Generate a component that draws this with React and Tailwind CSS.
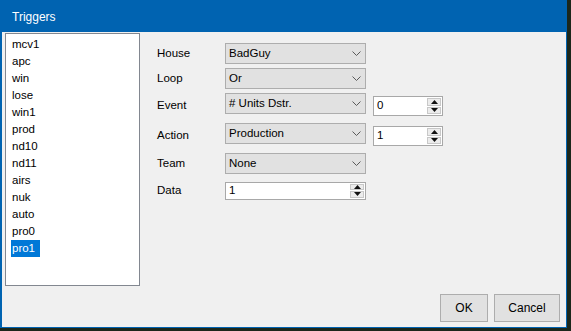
import { useState } from "react";

const TRIGGERS = ["mcv1", "apc", "win", "lose", "win1", "prod", "nd10", "nd11", "airs", "nuk", "auto", "pro0", "pro1"];

function Chevron() {
  return (
    <svg width="9" height="5" viewBox="0 0 9 5" className="shrink-0">
      <polyline points="0.5,0.5 4.5,4.5 8.5,0.5" fill="none" stroke="#5a5a5a" strokeWidth="1" />
    </svg>
  );
}

function Combo({ value, className = "" }) {
  return (
    <div className={"flex h-[21px] w-[141px] items-center justify-between border border-[#adadad] bg-[#e1e1e1] pl-[3px] pr-[4px] " + className}>
      <span className="leading-none">{value}</span>
      <Chevron />
    </div>
  );
}

function Arrows() {
  return (
    <div className="flex h-full w-[14px] flex-col gap-[1px] py-[1px]">
      <div className="flex flex-1 items-center justify-center border border-[#c8c8c8] bg-[#ececec]">
        <svg width="7" height="4" viewBox="0 0 7 4">
          <polygon points="3.5,0 7,4 0,4" fill="#111" />
        </svg>
      </div>
      <div className="flex flex-1 items-center justify-center border border-[#c8c8c8] bg-[#ececec]">
        <svg width="7" height="4" viewBox="0 0 7 4">
          <polygon points="0,0 7,0 3.5,4" fill="#111" />
        </svg>
      </div>
    </div>
  );
}

function Spinner({ value, className = "" }) {
  return (
    <div className={"flex items-stretch border border-[#a8a8a8] bg-white pl-[3px] pr-[1px] " + className}>
      <span className="flex-1 self-center leading-none">{value}</span>
      <Arrows />
    </div>
  );
}

function Label({ children, className = "" }) {
  return <div className={"flex h-[21px] w-[68px] items-center " + className}>{children}</div>;
}

export default function App() {
  const [selected, setSelected] = useState("pro1");

  return (
    <div className="h-[331px] w-[571px] bg-[#1b271b] text-[11.5px] text-black" style={{ fontFamily: '"Liberation Sans", Arial, sans-serif' }}>
      <div className="flex h-[328px] w-[567px] flex-col border border-l-2 border-[#0063b1] bg-[#f0f0f0]">
        {/* title bar */}
        <div className="flex h-[31px] shrink-0 items-center bg-[#0063b1] pl-[10px] text-[12px] text-white">
          Triggers
        </div>

        <div className="flex flex-1 flex-col">
          <div className="flex pt-[1px]">
            {/* trigger list */}
            <div className="ml-[3px] h-[253px] w-[135px] border border-[#828790] bg-white pl-[5px] pt-[2px]">
              {TRIGGERS.map((t) => (
                <div key={t} className="flex h-[17px] items-center">
                  <span
                    onClick={() => setSelected(t)}
                    className={
                      "flex h-[17px] items-center px-[1px] " +
                      (selected === t ? "w-[29px] bg-[#0078d7] text-white" : "")
                    }
                  >
                    {t}
                  </span>
                </div>
              ))}
            </div>

            {/* fields */}
            <div className="ml-[17px] flex flex-col pt-[10px]">
              <div className="flex">
                <Label>House</Label>
                <Combo value="BadGuy" />
              </div>
              <div className="mt-[4px] flex">
                <Label>Loop</Label>
                <Combo value="Or" />
              </div>
              <div className="mt-[4px] flex h-[23px] items-start">
                <Label className="mt-[2px]">Event</Label>
                <Combo value="# Units Dstr." />
                <Spinner value="0" className="ml-[7px] mt-[3px] h-[20px] w-[70px]" />
              </div>
              <div className="mt-[7px] flex h-[23px] items-start">
                <Label className="mt-[2px]">Action</Label>
                <Combo value="Production" />
                <Spinner value="1" className="ml-[7px] mt-[3px] h-[20px] w-[70px]" />
              </div>
              <div className="mt-[7px] flex">
                <Label>Team</Label>
                <Combo value="None" />
              </div>
              <div className="mt-[6px] flex items-center">
                <Label className="h-[18px]">Data</Label>
                <Spinner value="1" className="h-[18px] w-[141px]" />
              </div>
            </div>
          </div>

          {/* buttons */}
          <div className="mt-[8px] flex justify-end gap-[6px] pr-[6px]">
            <button className="h-[28px] w-[48px] border border-[#adadad] bg-[#e1e1e1] text-[12px]">OK</button>
            <button className="h-[28px] w-[66px] border border-[#adadad] bg-[#e1e1e1] text-[12px]">Cancel</button>
          </div>
        </div>
      </div>
    </div>
  );
}
